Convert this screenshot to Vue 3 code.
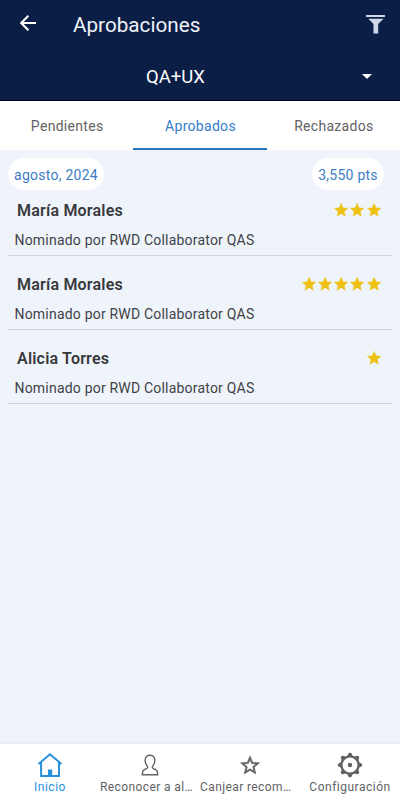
<script setup>
const tabs = ['Pendientes', 'Aprobados', 'Rechazados']
const active = 'Aprobados'
const nominations = [
  { name: 'María Morales', stars: 3 },
  { name: 'María Morales', stars: 5 },
  { name: 'Alicia Torres', stars: 1 },
]
</script>

<template>
  <div class="screen">
    <header class="header">
      <div class="titlebar">
        <svg class="back" width="18" height="18" viewBox="0 0 18 18">
          <path d="M17 9H2.3M9.4 1.8 2.2 9l7.2 7.2" fill="none" stroke="currentColor" stroke-width="2.1" />
        </svg>
        <h1 class="title">Aprobaciones</h1>
        <svg class="filter" width="20" height="20" viewBox="0 0 20 20">
          <path d="M1 .9h19v2H1zM3.3 4.7h15.2L13.2 10v9.4H8.5V10z" fill="currentColor" />
        </svg>
      </div>
      <div class="selector">
        <span class="team">QA+UX</span>
        <svg class="caret" width="10" height="5" viewBox="0 0 10 5"><path d="M0 0h10L5 5z" fill="currentColor" /></svg>
      </div>
    </header>

    <nav class="tabs">
      <div v-for="tab in tabs" :key="tab" class="tab" :class="{ selected: tab === active }">{{ tab }}</div>
    </nav>

    <main class="content">
      <div class="summary">
        <span class="chip month">agosto, 2024</span>
        <span class="chip points">3,550 pts</span>
      </div>
      <article v-for="(item, i) in nominations" :key="i" class="row">
        <div class="person">
          <h2 class="name">{{ item.name }}</h2>
          <div class="stars">
            <svg v-for="n in item.stars" :key="n" width="16.3" height="16.3" viewBox="0 0 24 24">
              <path d="m12 17.27 6.18 3.73-1.64-7.03L22 9.24l-7.19-.61L12 2 9.19 8.63 2 9.24l5.46 4.73L5.82 21z" fill="currentColor" stroke="currentColor" stroke-width=".6" />
            </svg>
          </div>
        </div>
        <p class="by">Nominado por RWD Collaborator QAS</p>
      </article>
    </main>

    <footer class="bottom">
      <div class="item current">
        <svg width="26" height="26" viewBox="0 0 26 26" fill="none" stroke="currentColor" stroke-width="2">
          <path d="M1.5 12 13 2.3 24.5 12M4.1 10v14H22V10" />
          <path d="M11 17.5h4.2V24H11z" fill="currentColor" stroke="none" />
        </svg>
        <span class="label">Inicio</span>
      </div>
      <div class="item">
        <svg width="26" height="26" viewBox="0 0 26 26" fill="none" stroke="currentColor" stroke-width="1.4">
          <path d="M10.3 14.2C7.2 10.4 7 3.2 13 3.2s5.8 7.2 2.7 11c-.7 1-.4 2 .7 2.4 3.7 1.2 4.3 2.7 4.3 6.2H5.3c0-3.5.6-5 4.3-6.2 1.1-.4 1.4-1.4.7-2.4z" />
        </svg>
        <span class="label clipped">Reconocer a al…</span>
      </div>
      <div class="item">
        <svg width="26" height="26" viewBox="0 0 26 26">
          <path transform="translate(1.5 1.9) scale(.96)" d="m22 9.24-7.19-.62L12 2 9.19 8.63 2 9.24l5.46 4.73L5.82 21 12 17.27 18.18 21l-1.63-7.03zM12 15.4l-3.76 2.27 1-4.28-3.32-2.88 4.38-.38L12 6.1l1.71 4.04 4.38.38-3.32 2.88 1 4.28z" fill="currentColor" stroke="currentColor" stroke-width=".5" />
        </svg>
        <span class="label clipped">Canjear recom…</span>
      </div>
      <div class="item">
        <svg width="26" height="26" viewBox="0 0 26 26">
          <circle cx="13" cy="13" r="8.6" fill="none" stroke="currentColor" stroke-width="2.3" />
          <circle cx="13" cy="13" r="2.2" fill="currentColor" />
          <path v-for="n in 8" :key="n" d="M10 4.8 11.2 2.1c.3-1.8 3.3-1.8 3.6 0L16 4.8z" :transform="`rotate(${n * 45} 13 13)`" fill="currentColor" />
        </svg>
        <span class="label">Configuración</span>
      </div>
    </footer>
  </div>
</template>

<style>
body { background: #eff4fb; }
</style>

<style scoped>
.screen {
  display: flex;
  flex-direction: column;
  width: 400px;
  height: 800px;
  overflow: hidden;
  background: #eff4fb;
  font-family: Roboto, "Liberation Sans", sans-serif;
  color: #38393d;
}
.header {
  box-sizing: border-box;
  height: 101px;
  background: #0a1e46;
  border-bottom: 1px solid #03071c;
  color: #fff;
}
.titlebar {
  display: flex;
  align-items: center;
  box-sizing: border-box;
  height: 48px;
  padding: 0 15px 0 19px;
}
.back { margin-top: -3px; }
.title {
  flex: 1;
  margin: 2px 0 0 36px;
  font-size: 20.7px;
  font-weight: 400;
  line-height: 24px;
  color: #f0f3f8;
}
.filter { margin-top: -1px; color: #cfd6ea; }
.selector {
  display: flex;
  align-items: center;
  height: 58px;
  padding: 0 28px 0 0;
}
.team { flex: 1; padding-left: 146px; font-size: 18.5px; line-height: 24px; }
.caret { margin-top: -1px; }
.tabs {
  display: grid;
  grid-template-columns: repeat(3, 1fr);
  height: 49px;
  background: #fff;
}
.tab {
  box-sizing: border-box;
  height: 49px;
  border-bottom: 2px solid transparent;
  padding: 1px 0 0 1px;
  text-align: center;
  font-size: 14px;
  line-height: 49px;
  letter-spacing: .3px;
  color: #626264;
}
.tab.selected { color: #357dc9; border-color: #2a76bd; }
.content { flex: 1; padding: 8px 8px 0; }
.summary { display: flex; justify-content: space-between; padding-right: 8px; }
.chip {
  box-sizing: border-box;
  height: 32px;
  border-radius: 16px;
  background: #fff;
  color: #3d7dc6;
  text-align: center;
  font-size: 14px;
  line-height: 34px;
  letter-spacing: .25px;
  white-space: nowrap;
}
.month { width: 96px; }
.points { width: 72px; }
.row {
  box-sizing: border-box;
  height: 74px;
  border-bottom: 1px solid #d0d4dc;
  padding-top: 18px;
}
.row:first-of-type { height: 66px; padding-top: 10px; }
.person {
  display: flex;
  justify-content: space-between;
  align-items: center;
  height: 22px;
  padding: 0 10px 0 9px;
}
.name { margin: 0; font-size: 16px; line-height: 22px; font-weight: 600; letter-spacing: .2px; }
.stars { display: flex; color: #eec114; margin-top: -2px; }
.by { margin: 9px 0 0 6.5px; font-size: 14px; line-height: 18px; letter-spacing: .2px; color: #414247; }
.bottom {
  display: grid;
  grid-template-columns: repeat(4, 100px);
  height: 56px;
  background: #fff;
  box-shadow: 0 -1px 3px #d9dfea80;
}
.item {
  display: flex;
  flex-direction: column;
  align-items: center;
  padding-top: 8px;
  color: #626264;
}
.item.current { color: #2990dc; }
.label { margin-top: 2px; font-size: 12px; line-height: 15px; letter-spacing: .5px; white-space: nowrap; }
.label.clipped { align-self: flex-start; letter-spacing: .4px; }
</style>
